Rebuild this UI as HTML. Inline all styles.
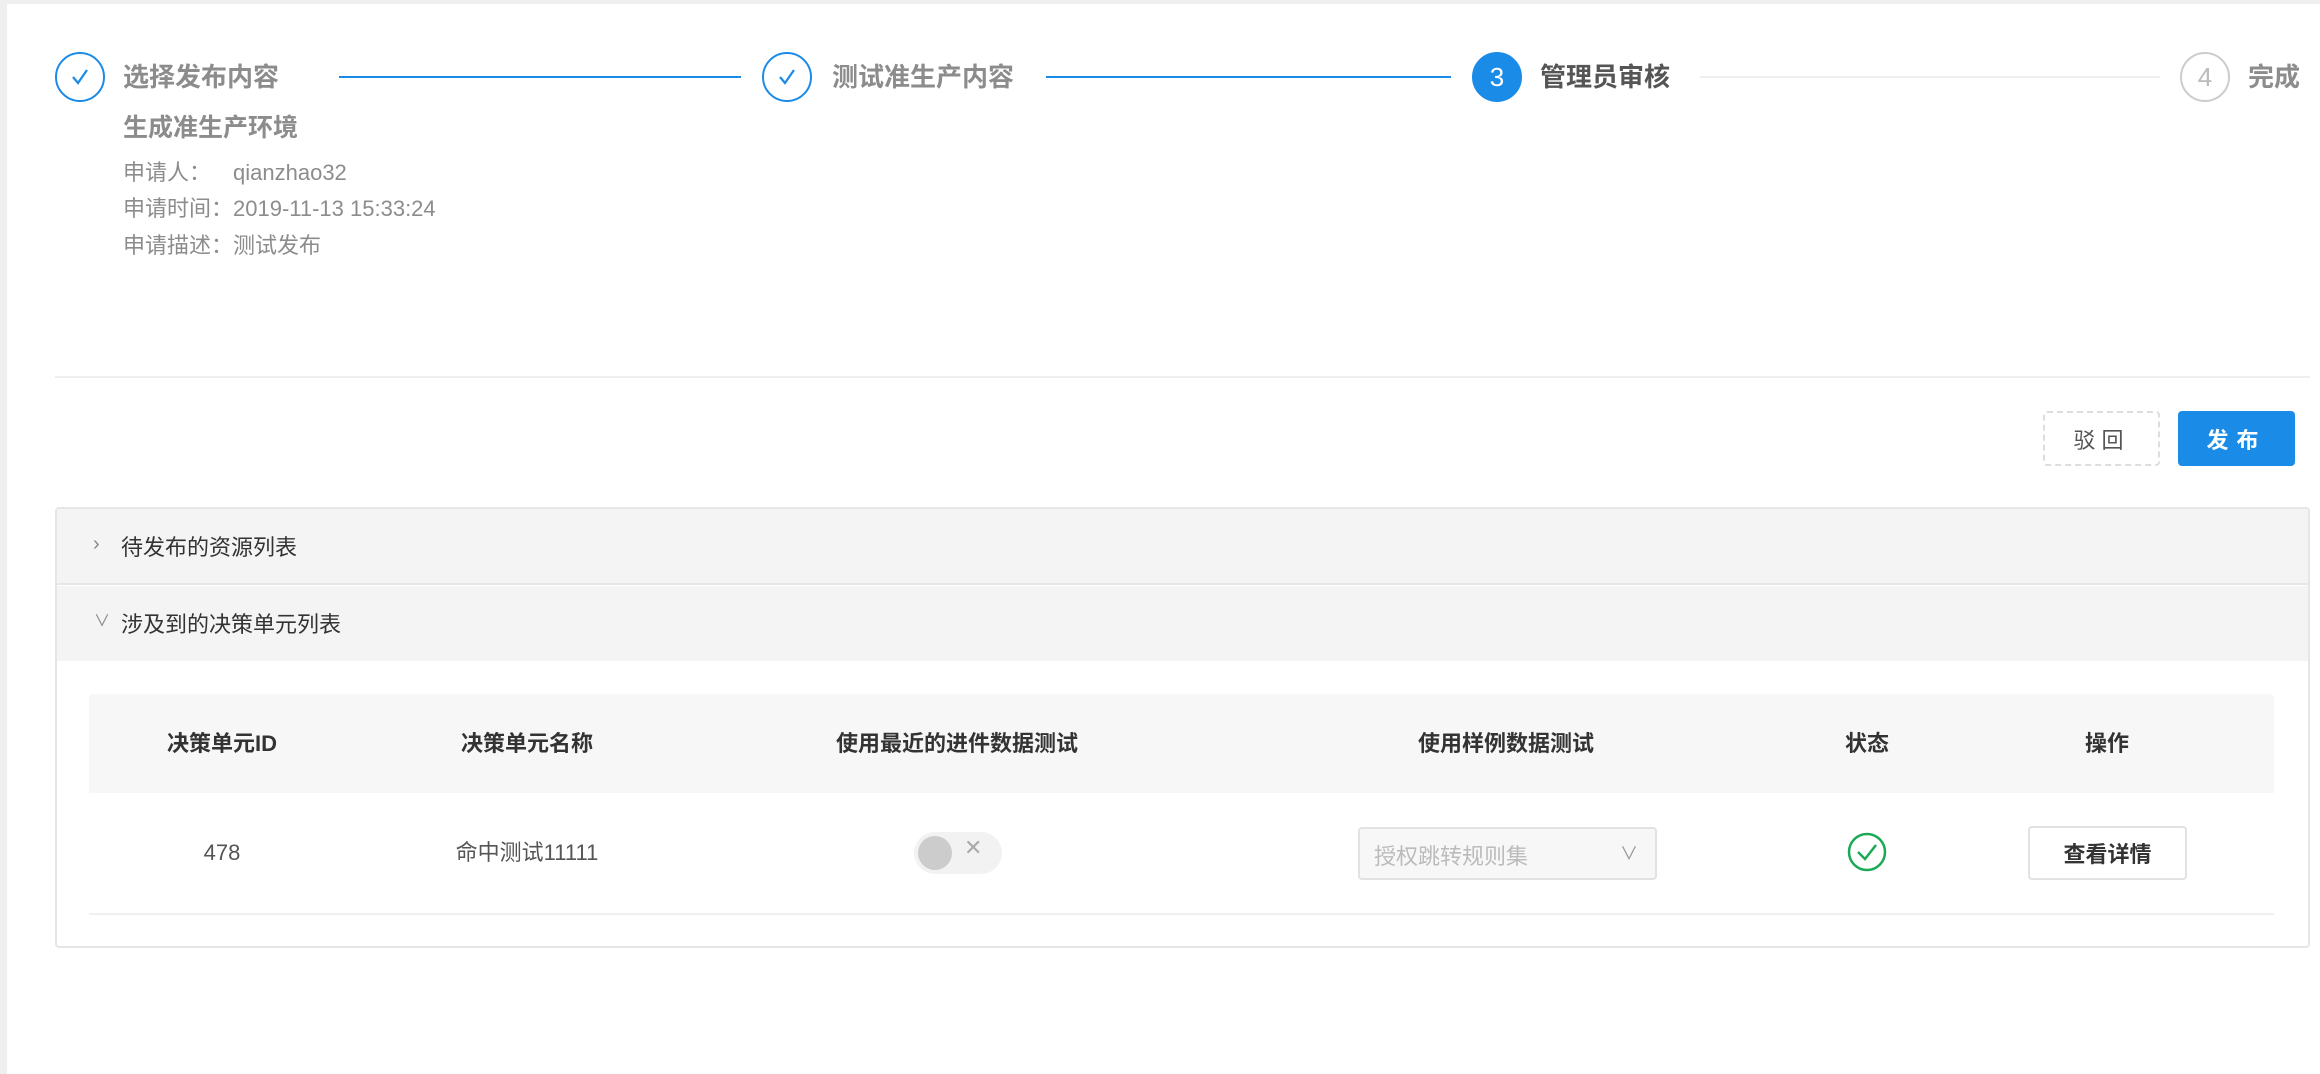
<!DOCTYPE html>
<html><head><meta charset="utf-8"><style>
*{box-sizing:border-box;margin:0;padding:0}
body{width:2320px;height:1074px;background:#efefef;font-family:"Liberation Sans","Noto Sans CJK SC",sans-serif;position:relative;overflow:hidden}
.main{position:absolute;left:7px;top:4px;right:0;bottom:0;background:#fff}
.a{position:absolute}
.circ{position:absolute;width:50px;height:50px;border-radius:50%;border:2px solid #1b8be8;display:flex;align-items:center;justify-content:center;font-size:26px}
.st{position:absolute;font-size:26px;font-weight:bold;color:#8c8c8c;line-height:30px}
.line{position:absolute;height:2px;top:76px}
.info{position:absolute;left:123px;font-size:22px;color:#8c8c8c;line-height:26px}
.btn{position:absolute;display:flex;align-items:center;justify-content:center;font-size:22px;border-radius:4px}
.th{position:absolute;top:694px;height:99px;line-height:99px;font-size:22px;font-weight:bold;color:#333;transform:translateX(-50%);white-space:nowrap}
.td{position:absolute;top:832px;line-height:42px;font-size:22px;color:#555;transform:translateX(-50%);white-space:nowrap}
</style></head><body>
<div class="main"></div>
<!-- steps -->
<div class="circ" style="left:55px;top:52px;color:#1b8be8"><svg width="22" height="22" viewBox="0 0 22 22"><path d="M4 11 L9 17 L18 4" fill="none" stroke="#1b8be8" stroke-width="2.2"/></svg></div>
<div class="st" style="left:123px;top:62px">选择发布内容</div>
<div class="line" style="left:339px;width:402px;background:#1b8be8"></div>
<div class="circ" style="left:762px;top:52px"><svg width="22" height="22" viewBox="0 0 22 22"><path d="M4 11 L9 17 L18 4" fill="none" stroke="#1b8be8" stroke-width="2.2"/></svg></div>
<div class="st" style="left:832px;top:62px">测试准生产内容</div>
<div class="line" style="left:1046px;width:405px;background:#1b8be8"></div>
<div class="circ" style="left:1472px;top:52px;background:#1b8be8;color:#fff">3</div>
<div class="st" style="left:1540px;top:62px;color:#555">管理员审核</div>
<div class="line" style="left:1700px;width:460px;background:#eee"></div>
<div class="circ" style="left:2180px;top:52px;border-color:#ccc;color:#bbb">4</div>
<div class="st" style="left:2248px;top:62px">完成</div>
<div class="st" style="left:123px;top:113px;font-size:25px">生成准生产环境</div>
<div class="info" style="top:160px">申请人：<span style="margin-left:22px">qianzhao32</span></div>
<div class="info" style="top:196px">申请时间：2019-11-13 15:33:24</div>
<div class="info" style="top:233px">申请描述：测试发布</div>
<div class="a" style="left:55px;top:376px;width:2255px;height:2px;background:#eee"></div>
<div class="btn" style="left:2043px;top:411px;width:117px;height:55px;border:2px dashed #ddd;color:#555;letter-spacing:6px">驳回</div>
<div class="btn" style="left:2178px;top:411px;width:117px;height:55px;background:#1b8be8;color:#fff;font-weight:bold;letter-spacing:8px">发布</div>
<!-- collapse -->
<div class="a" style="left:55px;top:507px;width:2255px;height:441px;border:2px solid #e6e6e6;border-radius:4px;background:#fff"></div>
<div class="a" style="left:57px;top:509px;width:2251px;height:76px;background:#f4f4f4;border-bottom:2px solid #e6e6e6"></div>
<div class="a" style="left:57px;top:586px;width:2251px;height:75px;background:#f4f4f4"></div>
<div class="a" style="left:93px;top:533px;font-size:20px;color:#888">›</div>
<div class="a" style="left:121px;top:530px;font-size:22px;color:#333">待发布的资源列表</div>
<div class="a" style="left:94px;top:607px;font-size:16px;color:#888">∨</div>
<div class="a" style="left:121px;top:607px;font-size:22px;color:#333">涉及到的决策单元列表</div>
<!-- table -->
<div class="a" style="left:89px;top:694px;width:2185px;height:99px;background:#f7f7f7;border-radius:4px 4px 0 0"></div>
<div class="a" style="left:89px;top:913px;width:2185px;height:2px;background:#f0f0f0"></div>
<div class="th" style="left:222px">决策单元ID</div>
<div class="th" style="left:527px">决策单元名称</div>
<div class="th" style="left:957px">使用最近的进件数据测试</div>
<div class="th" style="left:1506px">使用样例数据测试</div>
<div class="th" style="left:1867px">状态</div>
<div class="th" style="left:2107px">操作</div>
<div class="td" style="left:222px">478</div>
<div class="td" style="left:527px">命中测试11111</div>
<div class="a" style="left:914px;top:832px;width:88px;height:42px;border-radius:21px;background:#f2f2f2"></div>
<div class="a" style="left:918px;top:836px;width:34px;height:34px;border-radius:50%;background:#ccc"></div>
<div class="a" style="left:964px;top:835px;font-size:22px;color:#aaa">✕</div>
<div class="a" style="left:1358px;top:827px;width:299px;height:53px;border:2px solid #e2e2e2;border-radius:4px;background:#f7f7f7"></div>
<div class="a" style="left:1374px;top:839px;font-size:22px;color:#bbb">授权跳转规则集</div>
<div class="a" style="left:1620px;top:840px;font-size:18px;color:#999">∨</div>
<svg class="a" style="left:1847px;top:832px" width="40" height="40" viewBox="0 0 40 40"><circle cx="20" cy="20" r="18" fill="none" stroke="#1aaa55" stroke-width="2.5"/><path d="M11 20 L18 27 L29 13" fill="none" stroke="#1aaa55" stroke-width="2.5"/></svg>
<div class="btn" style="left:2028px;top:826px;width:159px;height:54px;border:2px solid #e2e2e2;color:#333;font-weight:bold">查看详情</div>
</body></html>
